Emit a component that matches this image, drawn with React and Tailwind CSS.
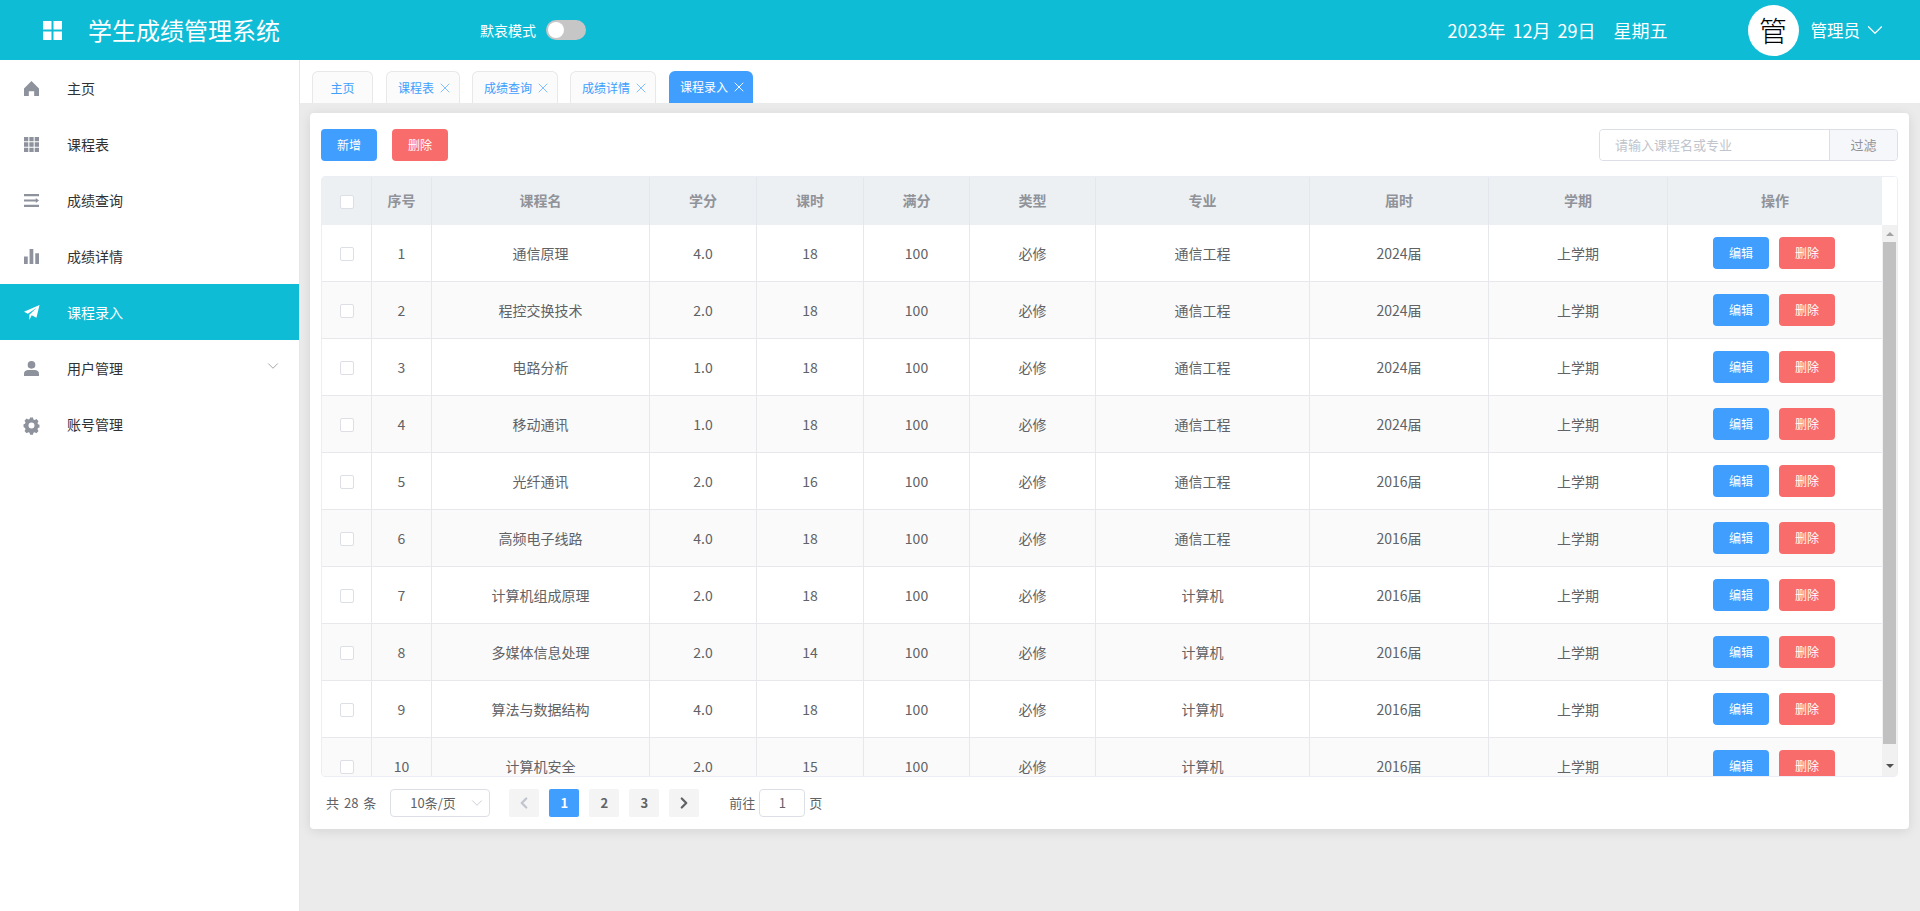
import { X, ChevronDown, ChevronLeft, ChevronRight } from 'lucide-react';

const MENU = [
  { name: '主页', icon: 'home' },
  { name: '课程表', icon: 'grid' },
  { name: '成绩查询', icon: 'bars' },
  { name: '成绩详情', icon: 'chart' },
  { name: '课程录入', icon: 'plane', active: true },
  { name: '用户管理', icon: 'user', arrow: true },
  { name: '账号管理', icon: 'gear' },
];

const TABS = [
  { name: '课程表' },
  { name: '成绩查询' },
  { name: '成绩详情' },
  { name: '课程录入', active: true },
];

const ROWS = [
  [1, '通信原理', '4.0', 18, 100, '必修', '通信工程', '2024届', '上学期'],
  [2, '程控交换技术', '2.0', 18, 100, '必修', '通信工程', '2024届', '上学期'],
  [3, '电路分析', '1.0', 18, 100, '必修', '通信工程', '2024届', '上学期'],
  [4, '移动通讯', '1.0', 18, 100, '必修', '通信工程', '2024届', '上学期'],
  [5, '光纤通讯', '2.0', 16, 100, '必修', '通信工程', '2016届', '上学期'],
  [6, '高频电子线路', '4.0', 18, 100, '必修', '通信工程', '2016届', '上学期'],
  [7, '计算机组成原理', '2.0', 18, 100, '必修', '计算机', '2016届', '上学期'],
  [8, '多媒体信息处理', '2.0', 14, 100, '必修', '计算机', '2016届', '上学期'],
  [9, '算法与数据结构', '4.0', 18, 100, '必修', '计算机', '2016届', '上学期'],
  [10, '计算机安全', '2.0', 15, 100, '必修', '计算机', '2016届', '上学期'],
];

const HEADS = ['序号', '课程名', '学分', '课时', '满分', '类型', '专业', '届时', '学期', '操作'];

// Sidebar icons, drawn on a 14 x 14 box
function MenuIcon({ type }) {
  const shapes = {
    home: <path d="M7 0 14 7V14H9.5V9.5H4.5V14H0V7Z" />,
    grid: <path d="M0 0h4v4H0zM5 0h4v4H5zM10 0h4v4h-4zM0 5h4v4H0zM5 5h4v4H5zM10 5h4v4h-4zM0 10h4v4H0zM5 10h4v4H5zM10 10h4v4h-4z" />,
    bars: <path d="M0 1h14v2H0zM0 6h11V4.6L14 7l-3 2.4V8H0zM0 11h14v2H0z" />,
    chart: <path d="M0 7h3.5v7H0zM5.2 0h3.5v14H5.2zM10.5 4H14v10h-3.5z" />,
    plane: <path d="M14.5 0 11.6 12 7.2 9.6 5 14V9L11.5 2.8 3.6 8.2 0 6.2Z" />,
    user: <path d="M7 0a3.6 3.6 0 1 1 0 7.2A3.6 3.6 0 0 1 7 0ZM0 14v-2.2C0 9.600 1.800 8.400 4 8.400h6c2.200 0 4 1.200 4 3.400V14Z" />,
    gear: (
      <path
        fillRule="evenodd"
        d="M5.500 0h3l.4 1.900 1.300.6L12 1.500l2 2.200-1 1.700.5 1.300 1.500.5v2.800l-1.500.5-.5 1.300 1 1.700-2 2.200-1.800-1-1.300.6-.4 1.900h-3l-.4-1.900-1.300-.6-1.800 1-2-2.200 1-1.700-.5-1.300L-1 9.500V6.700l1.500-.5.5-1.300-1-1.700 2-2.200 1.800 1 1.300-.6ZM7 5a3 3 0 1 0 0 6 3 3 0 0 0 0-6Z"
        transform="translate(0.5 0.500) scale(0.93)"
      />
    ),
  };
  return (
    <svg className="h-[15px] w-[15px] shrink-0 overflow-visible" viewBox="0 0 14 14" fill="currentColor">
      {shapes[type]}
    </svg>
  );
}

function Checkbox() {
  return <span className="mb-[2px] inline-block h-[14px] w-[14px] rounded-[2px] border border-[#dcdfe6] bg-white align-middle" />;
}

function Button({ children, color }) {
  return (
    <button type="button" className={`h-8 w-14 rounded-[4px] text-xs text-white ${color}`}>
      {children}
    </button>
  );
}

function PageButton({ children, active }) {
  return (
    <span
      className={`flex h-7 w-[30px] items-center justify-center rounded-[2px] text-[13px] font-bold ${
        active ? 'bg-[#409eff] text-white' : 'bg-[#f4f4f5] text-[#606266]'
      }`}
    >
      {children}
    </span>
  );
}

function Header() {
  return (
    <header className="flex h-[60px] shrink-0 items-center bg-[#0fbcd6] pr-[38px] text-white">
      <svg className="ml-[43px] h-[19px] w-[19px]" viewBox="0 0 19 19" fill="currentColor">
        <path d="M0 0h8.500v8.500H0zM10.500 0H19v8.500h-8.500zM0 10.500h8.500V19H0zM10.500 10.500H19V19h-8.500z" />
      </svg>
      <h1 className="ml-[26px] text-2xl leading-8 font-normal">学生成绩管理系统</h1>
      <span className="ml-[200px] text-sm">默哀模式</span>
      <span className="ml-[10px] flex h-5 w-10 items-center rounded-full bg-[#c6c6c6] px-[2px]">
        <span className="h-4 w-4 rounded-full bg-white" />
      </span>
      <div className="ml-auto flex items-center text-lg">
        <span className="[word-spacing:3px]">2023年 12月 29日</span>
        <span className="ml-[18px]">星期五</span>
      </div>
      <span className="ml-[80px] flex h-[51px] w-[51px] items-center justify-center rounded-full bg-white text-[28px] leading-none font-light text-black">
        管
      </span>
      <span className="ml-[12px] text-[16.500px]">管理员</span>
      <ChevronDown className="-mr-[6px] ml-[2px] h-[26px] w-[26px]" strokeWidth={1.100} />
    </header>
  );
}

function Sidebar() {
  return (
    <aside className="w-[300px] shrink-0 border-r border-[#e6e6e6] bg-white">
      {MENU.map((item) => (
        <div
          key={item.name}
          className={`flex h-14 items-center pr-[17px] pl-[24px] text-sm ${
            item.active ? 'bg-[#0fbcd6] text-white' : 'text-[#303133]'
          }`}
        >
          <span className={item.active ? 'text-white' : 'text-[#8e929c]'}>
            <MenuIcon type={item.icon} />
          </span>
          <span className="ml-[28px]">{item.name}</span>
          {item.arrow && <ChevronDown className="mb-[5px] ml-auto h-[18px] w-[18px] text-[#909399]" strokeWidth={1.100} />}
        </div>
      ))}
    </aside>
  );
}

function TabBar() {
  return (
    <div className="flex h-[43px] shrink-0 items-end gap-[12px] bg-white pl-[12px] text-xs">
      <span className="mr-[1px] flex h-[32px] w-[61px] items-center justify-center rounded-t-[6px] border border-b-0 border-[#e8e8e8] bg-[#fbfbfb] text-[#409eff]">
        主页
      </span>
      {TABS.map((tab) => (
        <span
          key={tab.name}
          className={`flex h-[32px] items-center rounded-t-[6px] pr-[6px] pl-[11px] ${
            tab.active ? 'ml-[1px] bg-[#409eff] text-white' : 'border border-b-0 border-[#e8e8e8] bg-[#fbfbfb] text-[#409eff]'
          }`}
        >
          {tab.name}
          <X className={`ml-[3px] h-4 w-4 ${tab.active ? 'text-white' : 'text-[#79bbff]'}`} strokeWidth={1.400} />
        </span>
      ))}
    </div>
  );
}

function CourseTable() {
  const colgroup = (
    <colgroup>
      <col className="w-[50px]" />
      <col className="w-[60px]" />
      <col className="w-[218px]" />
      <col className="w-[107px]" />
      <col className="w-[107px]" />
      <col className="w-[106px]" />
      <col className="w-[126px]" />
      <col className="w-[214px]" />
      <col className="w-[179px]" />
      <col className="w-[179px]" />
      <col className="w-[214px]" />
    </colgroup>
  );

  return (
    <div className="flex h-[601px] overflow-hidden rounded-[4px] border border-[#ebeef5]">
      <div className="w-[1560px] shrink-0">
        <table className="w-[1560px] table-fixed border-separate border-spacing-0 text-sm">
          {colgroup}
          <thead>
            <tr className="bg-[#edf0f3] text-[#909399]">
              <th className="h-[48px] border-r border-[#e4e7ed] pb-[1px] font-bold">
                <Checkbox />
              </th>
              {HEADS.map((head, i) => (
                <th key={head} className={`pb-[2px] font-bold ${i < HEADS.length - 1 ? 'border-r border-[#e4e7ed]' : ''}`}>
                  {head}
                </th>
              ))}
            </tr>
          </thead>
        </table>
        <div className="h-[551px] overflow-hidden">
          <table className="w-[1560px] table-fixed border-separate border-spacing-0 text-sm text-[#606266]">
            {colgroup}
            <tbody>
              {ROWS.map((row, r) => (
                <tr key={row[0]} className={r % 2 === 1 ? 'bg-[#fafafa]' : 'bg-white'}>
                  <td className="h-[57px] border-r border-b border-[#e6e8ec] text-center">
                    <Checkbox />
                  </td>
                  {row.map((cell, c) => (
                    <td key={c} className="border-r border-b border-[#e6e8ec] text-center">
                      {cell}
                    </td>
                  ))}
                  <td className="border-b border-[#e6e8ec]">
                    <div className="flex justify-center gap-[10px] pr-[2px]">
                      <Button color="bg-[#409eff]">编辑</Button>
                      <Button color="bg-[#f96c6c]">删除</Button>
                    </div>
                  </td>
                </tr>
              ))}
            </tbody>
          </table>
        </div>
      </div>
      {/* scrollbar */}
      <div className="flex-1">
        <div className="h-[48px] bg-white" />
        <div className="relative h-[551px] bg-[#f1f1f1]">
          <div className="mx-auto flex h-[17px] items-center justify-center">
            <span className="h-0 w-0 border-x-[4px] border-b-[4px] border-x-transparent border-b-[#a3a3a3]" />
          </div>
          <div className="mx-[1px] h-[502px] bg-[#c1c1c1]" />
          <div className="mx-auto flex h-[30px] items-center justify-center pt-[14px]">
            <span className="h-0 w-0 border-x-[4px] border-t-[4px] border-x-transparent border-t-[#505050]" />
          </div>
        </div>
      </div>
    </div>
  );
}

export default function App() {
  return (
    <div className="flex h-[911px] w-full flex-col overflow-hidden bg-[#ebebeb] font-['Noto_Sans_CJK_SC','Noto_Sans',sans-serif]">
      <Header />
      <div className="flex min-h-0 flex-1">
        <Sidebar />
        <main className="flex min-w-0 flex-1 flex-col">
          <TabBar />
          <section className="mt-[10px] mr-[11px] ml-[10px] rounded-[4px] bg-white px-[11px] pt-4 pb-[12px] shadow-[0_2px_12px_0_rgba(0,0,0,0.1)]">
            <div className="mb-[15px] flex h-8 items-center">
              <Button color="bg-[#409eff]">新增</Button>
              <span className="ml-[15px]">
                <Button color="bg-[#f96c6c]">删除</Button>
              </span>
              <div className="ml-auto flex h-8 w-[299px] rounded-[4px] border border-[#dcdfe6] text-[13px]">
                <input
                  className="min-w-0 flex-1 rounded-l-[4px] bg-white pl-[15px] outline-none placeholder:text-[#c0c4cc]"
                  placeholder="请输入课程名或专业"
                />
                <span className="flex w-[68px] items-center justify-center rounded-r-[4px] border-l border-[#dcdfe6] bg-[#f5f7fa] text-[#909399]">
                  过滤
                </span>
              </div>
            </div>

            <CourseTable />

            <div className="mt-[12px] flex h-7 items-center text-[13px] text-[#606266]">
              <span className="ml-[5px] [word-spacing:2px]">共 28 条</span>
              <span className="relative ml-[14px] flex h-7 w-[100px] items-center rounded-[4px] border border-[#dcdfe6] pl-[19px]">
                10条/页
                <ChevronDown className="absolute top-[4px] right-[3px] h-[18px] w-[18px] text-[#c0c4cc]" strokeWidth={1.100} />
              </span>
              <div className="ml-[19px] flex items-center gap-[10px]">
                <PageButton>
                  <ChevronLeft className="h-[18px] w-[18px] text-[#c0c4cc]" strokeWidth={3} />
                </PageButton>
                <PageButton active>1</PageButton>
                <PageButton>2</PageButton>
                <PageButton>3</PageButton>
                <PageButton>
                  <ChevronRight className="h-[18px] w-[18px]" strokeWidth={3} />
                </PageButton>
              </div>
              <span className="ml-[30px]">前往</span>
              <span className="mx-[4px] flex h-7 w-[46px] items-center justify-center rounded-[4px] border border-[#dcdfe6]">1</span>
              <span>页</span>
            </div>
          </section>
        </main>
      </div>
    </div>
  );
}
